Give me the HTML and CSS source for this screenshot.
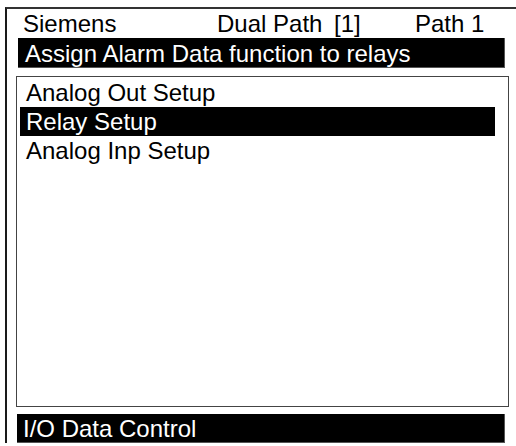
FILE: index.html
```html
<!DOCTYPE html>
<html lang="en">
<head>
  <meta charset="UTF-8">
  <title>I/O Data Control</title>
  <link rel="stylesheet" href="styles.css">
</head>
<body>
  <div class="screen">
    <div class="status">
      <span>Siemens</span>
      <span>Dual Path</span>
      <span>[1]</span>
      <span>Path 1</span>
    </div>
    <div class="prompt">Assign Alarm Data function to relays</div>
    <ul class="menu">
      <li>Analog Out Setup</li>
      <li class="selected">Relay Setup</li>
      <li>Analog Inp Setup</li>
    </ul>
    <div class="footer">I/O Data Control</div>
  </div>
</body>
</html>
```

FILE: styles.css
```css
body {
  margin: 0;
  background: #fff;
  font-family: "Liberation Sans", Arial, sans-serif;
  font-size: 24px;
  color: #000;
}
.screen {
  margin: 7px 0 0 5px;
  height: 434px;
  border-left: 2px solid #1a1a1a;
  border-top: 2px solid #333;
}
.status {
  display: grid;
  grid-template-columns: 194px 117px 81px auto;
  height: 29px;
  padding: 1px 0 0 16px;
  box-sizing: border-box;
  line-height: 28px;
}
.prompt {
  margin-left: 11px;
  width: 487px;
  height: 30px;
  padding: 2px 0 0 7px;
  box-sizing: border-box;
  line-height: 28px;
  background: #000;
  color: #fff;
  border: 1px solid #555;
  border-width: 0 1px 1px 0;
}
.menu {
  list-style: none;
  margin: 8px 0 0 9px;
  width: 493px;
  height: 331px;
  padding: 1px 13px 0 3px;
  box-sizing: border-box;
  border: 1px solid #444;
}
.menu li {
  height: 29px;
  line-height: 30px;
  padding-left: 6px;
}
.menu li.selected {
  background: #000;
  color: #fff;
}
.footer {
  margin: 7px 0 0 10px;
  width: 488px;
  height: 29px;
  padding: 1px 0 0 6px;
  box-sizing: border-box;
  line-height: 28px;
  background: #000;
  color: #fff;
  border: 1px solid #555;
  border-width: 0 1px 1px 0;
}
```
